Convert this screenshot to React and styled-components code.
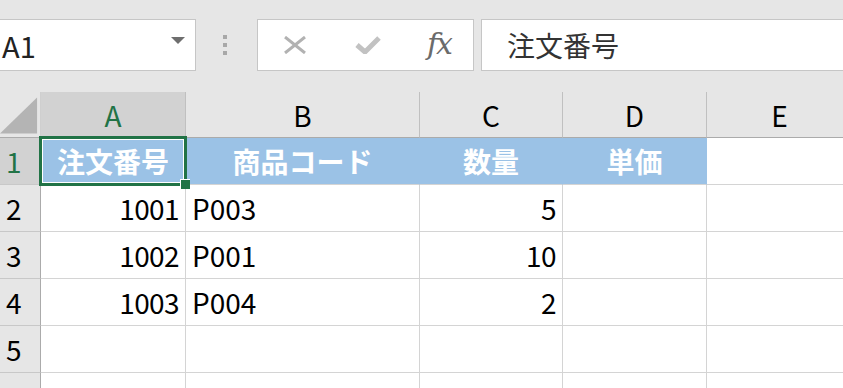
import React from "react";
import styled, { createGlobalStyle, css } from "styled-components";

const GlobalStyle = createGlobalStyle`
  html, body {
    margin: 0;
    padding: 0;
    background: #e6e6e6;
  }
  body {
    font-family: "Noto Sans CJK JP", "Noto Sans", sans-serif;
  }
`;

const columns = [
  { key: "A", width: 145 },
  { key: "B", width: 234 },
  { key: "C", width: 143 },
  { key: "D", width: 144 },
  { key: "E", width: 146 },
];

const rows = [
  ["注文番号", "商品コード", "数量", "単価", ""],
  ["1001", "P003", "5", "", ""],
  ["1002", "P001", "10", "", ""],
  ["1003", "P004", "2", "", ""],
  ["", "", "", "", ""],
  ["", "", "", "", ""],
];

const isNumber = (v) => /^\d+$/.test(v);

function App() {
  return (
    <Frame>
      <GlobalStyle />
      <Toolbar>
        <NameBox>
          <span>A1</span>
          <DropArrow />
        </NameBox>
        <Grip>
          <i />
          <i />
          <i />
        </Grip>
        <FxBox>
          <FxIcon>
            <svg width="24" height="18" viewBox="0 0 24 18">
              <path d="M2 1 L22 17 M22 1 L2 17" stroke="#b2b2b2" strokeWidth="3" fill="none" />
            </svg>
          </FxIcon>
          <FxIcon>
            <svg width="26" height="18" viewBox="0 0 26 18">
              <path d="M2 9 L10 16 L24 2" stroke="#c2c2c2" strokeWidth="5" fill="none" />
            </svg>
          </FxIcon>
          <FxLabel>fx</FxLabel>
        </FxBox>
        <FormulaInput>注文番号</FormulaInput>
      </Toolbar>

      <Sheet>
        <Corner>
          <svg width="41" height="46" viewBox="0 0 41 46">
            <polygon points="38,5 38,42 0,42" fill="#b4b4b4" />
          </svg>
        </Corner>
        {columns.map((c) => (
          <ColHead key={c.key} $selected={c.key === "A"}>
            {c.key}
          </ColHead>
        ))}

        {rows.map((row, r) => (
          <React.Fragment key={r}>
            <RowHead $selected={r === 0}>{r + 1}</RowHead>
            {row.map((v, c) => (
              <Cell
                key={c}
                $header={r === 0 && c < 4}
                $right={isNumber(v)}
                $active={r === 0 && c === 0}
              >
                {v}
                {r === 0 && c === 0 && <FillHandle />}
              </Cell>
            ))}
          </React.Fragment>
        ))}
      </Sheet>
    </Frame>
  );
}

export default App;

const Frame = styled.div`
  width: 843px;
  height: 388px;
  overflow: hidden;
  display: flex;
  flex-direction: column;
  background: #e6e6e6;
`;

const Toolbar = styled.div`
  height: 92px;
  flex: none;
  display: flex;
  align-items: flex-start;
  padding-top: 19px;
  box-sizing: border-box;
`;

const boxBase = css`
  height: 52px;
  box-sizing: border-box;
  background: #fff;
  border: 1px solid #c6c6c6;
  display: flex;
  align-items: center;
`;

const NameBox = styled.div`
  ${boxBase};
  width: 198px;
  margin-left: -2px;
  padding: 0 10px 0 4px;
  justify-content: space-between;
  font-size: 29px;
  color: #222;
  border-left: none;
`;

const DropArrow = styled.span`
  width: 0;
  height: 0;
  border-left: 7px solid transparent;
  border-right: 7px solid transparent;
  border-top: 7px solid #6e6e6e;
  margin-top: -10px;
`;

const Grip = styled.div`
  width: 61px;
  height: 52px;
  display: flex;
  flex-direction: column;
  align-items: center;
  justify-content: center;
  gap: 4px;
  padding-right: 4px;
  box-sizing: border-box;

  i {
    display: block;
    width: 4px;
    height: 4px;
    background: #a8a8a8;
  }
`;

const FxBox = styled.div`
  ${boxBase};
  width: 217px;
  padding: 0 22px 0 25px;
  justify-content: space-between;
`;

const FxIcon = styled.span`
  display: flex;
  align-items: center;
  width: 26px;
`;

const FxLabel = styled.span`
  font-family: "DejaVu Serif", "Liberation Serif", serif;
  font-style: italic;
  font-size: 30px;
  letter-spacing: -2px;
  color: #6b6b6b;
  margin-top: -3px;
`;

const FormulaInput = styled.div`
  ${boxBase};
  margin-left: 7px;
  flex: 1;
  margin-right: -10px;
  padding-left: 25px;
  font-size: 28px;
  color: #333;
`;

const Sheet = styled.div`
  flex: 1;
  display: grid;
  grid-template-columns: 41px ${columns.map((c) => c.width + "px").join(" ")};
  grid-template-rows: 46px repeat(6, 47px);
  background: #fff;
  font-size: 28px;
`;

const headBase = css`
  background: #e6e6e6;
  box-sizing: border-box;
  display: flex;
  align-items: center;
`;

const Corner = styled.div`
  ${headBase};
  border-right: 1px solid #cfcfcf;
  border-bottom: 1px solid #ababab;
  svg {
    display: block;
  }
`;

const ColHead = styled.div`
  ${headBase};
  justify-content: center;
  border-right: 1px solid #c0c0c0;
  border-bottom: 1px solid #ababab;
  color: #000;
  ${(p) =>
    p.$selected &&
    css`
      background: #d2d2d2;
      color: #217346;
    `}
`;

const RowHead = styled.div`
  ${headBase};
  padding-left: 6px;
  border-right: 1px solid #ababab;
  border-bottom: 1px solid #c8c8c8;
  color: #000;
  ${(p) =>
    p.$selected &&
    css`
      background: #d2d2d2;
      color: #217346;
    `}
`;

const Cell = styled.div`
  position: relative;
  box-sizing: border-box;
  display: flex;
  align-items: center;
  padding: 0 6px;
  white-space: nowrap;
  letter-spacing: ${(p) => (p.$right ? "-0.6px" : "0")};
  border-right: 1px solid #d4d4d4;
  border-bottom: 1px solid #d4d4d4;
  color: #000;
  justify-content: ${(p) => (p.$right ? "flex-end" : "flex-start")};
  ${(p) =>
    p.$header &&
    css`
      background: #9bc2e6;
      color: #fff;
      font-weight: 700;
      justify-content: center;
      border-right-color: #9bc2e6;
      border-bottom-color: #d4d4d4;
    `}
  ${(p) =>
    p.$active &&
    css`
      z-index: 1;
      &::after {
        content: "";
        position: absolute;
        top: -2px;
        left: -2px;
        right: -2px;
        bottom: -2px;
        border: 3px solid #217346;
        box-shadow: inset 0 0 0 1px #fff;
        pointer-events: none;
      }
    `}
`;

const FillHandle = styled.span`
  position: absolute;
  right: -5px;
  bottom: -5px;
  width: 10px;
  height: 10px;
  box-sizing: border-box;
  background: #217346;
  border-left: 1px solid #fff;
  border-top: 1px solid #fff;
  z-index: 2;
`;
